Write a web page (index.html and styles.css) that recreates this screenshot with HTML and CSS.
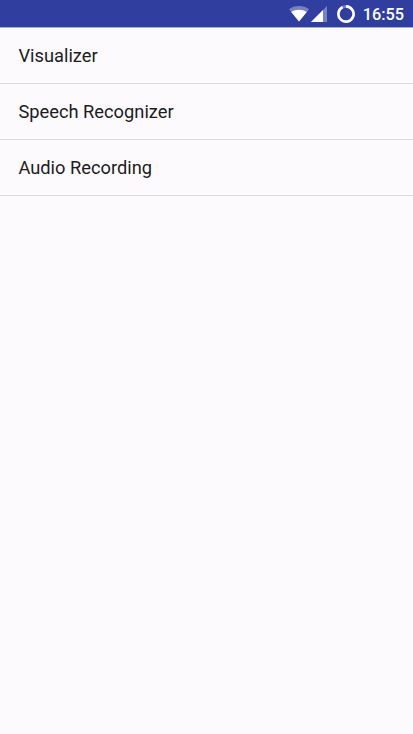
FILE: index.html
```
<!DOCTYPE html>
<html lang="en">
<head>
  <meta charset="UTF-8">
  <meta name="viewport" content="width=device-width, initial-scale=1.0">
  <title>Audio Samples</title>
  <link rel="stylesheet" href="styles.css">
</head>
<body>
  <header class="status-bar">
    <svg class="icon-wifi" width="20" height="16" viewBox="0 0 20 16">
      <path d="M0 3.2C5.6-1 14.4-1 20 3.2L10 15.6z" fill="#fff" fill-opacity=".35"/>
      <path d="M2.2 6C6.8 2.9 13.2 2.9 17.8 6L10 15.6z" fill="#fff"/>
    </svg>
    <svg class="icon-signal" width="16" height="16" viewBox="0 0 16 16">
      <path d="M16 0v16H0z" fill="#fff" fill-opacity=".35"/>
      <path d="M12 4v12H0z" fill="#fff"/>
    </svg>
    <svg class="icon-battery" width="18" height="18" viewBox="0 0 18 18" fill="none" stroke="#fff" stroke-width="2.6">
      <circle cx="9" cy="9" r="7.6" stroke-opacity=".35"/>
      <path d="M9 1.4A7.6 7.6 0 1 1 5.6 2.2"/>
    </svg>
    <span class="time">16:55</span>
  </header>
  <ul class="list">
    <li>Visualizer</li>
    <li>Speech Recognizer</li>
    <li>Audio Recording</li>
  </ul>
</body>
</html>
```
FILE: styles.css
```
html,
body {
  margin: 0;
  padding: 0;
  background: #fcfafd;
  font-family: Roboto, sans-serif;
}
.status-bar {
  display: flex;
  align-items: center;
  height: 28px;
  box-sizing: border-box;
  padding-right: 9px;
  justify-content: flex-end;
  background: #303f9f;
  border-bottom: 1px solid #a5aad3;
  color: #fff;
}
.icon-signal {
  margin-left: 2px;
}
.icon-battery {
  margin-left: 10px;
}
.time {
  margin-left: 8px;
  padding-top: 2px;
  font-size: 16.3px;
  font-weight: 500;
  line-height: 25px;
}
.list {
  margin: 0;
  padding: 0;
  list-style: none;
}
.list li {
  height: 56px;
  box-sizing: border-box;
  padding-left: 18.4px;
  border-bottom: 1px solid #dad9dc;
  color: #1c1c1e;
  font-size: 18.3px;
  line-height: 56px;
}
```
